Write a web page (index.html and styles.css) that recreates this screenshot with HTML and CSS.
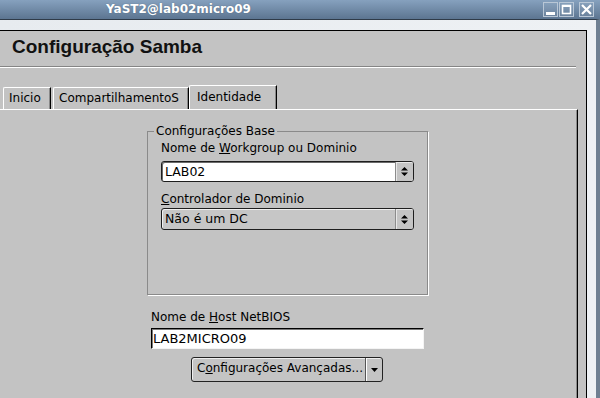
FILE: index.html
```html
<!DOCTYPE html>
<html lang="pt">
<head>
<meta charset="utf-8">
<title>Configuração Samba</title>
<link rel="stylesheet" href="styles.css">
</head>
<body>
<div class="titlebar">
  <span class="title">YaST2@lab02micro09</span>
  <div class="wbtns">
    <span class="wbtn"><svg width="13" height="13" viewBox="0 0 13 13"><rect x="2" y="9" width="9" height="3" fill="#fff"/></svg></span>
    <span class="wbtn gap"><svg width="13" height="13" viewBox="0 0 13 13"><rect x="2.5" y="2.5" width="8" height="8" fill="none" stroke="#fff" stroke-width="1.6"/><rect x="2" y="2" width="9" height="2" fill="#fff"/></svg></span>
    <span class="wbtn gap2"><svg width="13" height="13" viewBox="0 0 13 13"><path d="M2 2 L11 11 M11 2 L2 11" stroke="#fff" stroke-width="2.2"/></svg></span>
  </div>
</div>
<div class="frame">
  <div class="content">
    <h1 class="heading">Configuração Samba</h1>
    <div class="sep"></div>
    <div class="tabs">
      <div class="tab t1">Inicio</div>
      <div class="tab t2">CompartilhamentoS</div>
      <div class="tab t3 active">Identidade</div>
    </div>
    <div class="panel">
      <fieldset class="group">
        <legend>Configurações Base</legend>
        <div class="label">Nome de <u>W</u>orkgroup ou Dominio</div>
        <div class="combo editable">
          <span class="ctext">LAB02</span>
          <span class="spin"><svg width="9" height="11" viewBox="0 0 9 11"><path d="M1 4.5 L4.5 1 L8 4.5 Z M1 6.5 L4.5 10 L8 6.5 Z" fill="#000"/></svg></span>
        </div>
        <div class="label l2"><u>C</u>ontrolador de Dominio</div>
        <div class="combo readonly">
          <span class="ctext">Não é um DC</span>
          <span class="spin"><svg width="9" height="11" viewBox="0 0 9 11"><path d="M1 4.5 L4.5 1 L8 4.5 Z M1 6.5 L4.5 10 L8 6.5 Z" fill="#000"/></svg></span>
        </div>
      </fieldset>
      <div class="label nb">Nome de <u>H</u>ost NetBIOS</div>
      <div class="input">LAB2MICRO09</div>
      <div class="splitbtn">
        <span class="btn-main">C<u>o</u>nfigurações Avançadas...</span>
        <span class="btn-arrow"><svg width="9" height="6" viewBox="0 0 9 6"><path d="M1 1 L8 1 L4.5 5 Z" fill="#000"/></svg></span>
      </div>
    </div>
  </div>
</div>
</body>
</html>
```

FILE: styles.css
```css
html, body {
  margin: 0;
  padding: 0;
}
body {
  width: 600px;
  height: 398px;
  overflow: hidden;
  display: flex;
  flex-direction: column;
  font-family: "DejaVu Sans", sans-serif;
  font-size: 12px;
  color: #000;
  background: #e7ebef;
}
.titlebar {
  height: 19px;
  flex: none;
  display: flex;
  align-items: center;
  background: linear-gradient(#86a1be, #5c7591);
}
.title {
  margin-left: 106px;
  color: #fff;
  font-weight: bold;
  font-size: 12px;
  line-height: 19px;
  text-shadow: 0 0 1px rgba(40, 60, 80, 0.5);
}
.wbtns {
  margin-left: auto;
  margin-right: 6px;
  display: flex;
  align-items: center;
}
.wbtn {
  width: 15px;
  height: 15px;
  box-sizing: border-box;
  border: 1px solid #b9c7d6;
  display: flex;
  align-items: center;
  justify-content: center;
  background: rgba(255, 255, 255, 0.06);
}
.wbtn.gap { margin-left: 1px; }
.wbtn.gap2 { margin-left: 5px; }
.frame {
  flex: 1;
  display: flex;
  flex-direction: column;
  border-top: 1px solid #2f3b49;
  padding-top: 10px;
  padding-right: 9px;
  border-right: 4px solid #6f8092;
  background: linear-gradient(90deg, #e7ebef, #eef1f4);
}
.content {
  flex: 1;
  display: flex;
  flex-direction: column;
  background: #c3c3c3;
  border-top: 1px solid #000;
  border-right: 1px solid #000;
}
.heading {
  margin: 5px 0 0 12px;
  font-family: "Liberation Sans", Arial, sans-serif;
  font-weight: bold;
  font-size: 19px;
  line-height: 22px;
  color: #111;
}
.sep {
  margin: 8px 10px 0 0;
  border-top: 1px solid #858585;
  border-bottom: 1px solid #fff;
}
.tabs {
  margin-top: 17px;
  height: 24px;
  display: flex;
  align-items: flex-end;
}
.tab {
  box-sizing: border-box;
  height: 22px;
  padding-top: 2px;
  line-height: 16px;
  border-top: 1px solid #fff;
  border-left: 1px solid #fff;
  border-right: 1px solid #000;
  border-top-left-radius: 2px;
  box-shadow: inset -1px 0 0 #888;
  white-space: nowrap;
}
.t1 { margin-left: 3px; width: 48px; padding-left: 5px; }
.t2 { margin-left: 2px; width: 136px; padding-left: 5px; }
.t3 { width: 88px; padding-left: 7px; }
.tab.active { height: 24px; padding-top: 3px; }
.panel {
  flex: 1;
  margin-right: 8px;
  border-top: 1px solid #fff;
  border-right: 1px solid #000;
  box-shadow: inset -1px 0 0 #8a8a8a;
  display: flex;
  flex-direction: column;
  align-items: flex-start;
}
.group {
  box-sizing: border-box;
  width: 281px;
  min-width: 0;
  margin: 13px 0 0 147px;
  padding: 1px 12px 64px 13px;
  border: 1px solid #8a8a8a;
  box-shadow: 1px 1px 0 #fff;
}
.group legend {
  padding: 0 2px;
  margin-left: -7px;
  line-height: 16px;
}
.label {
  line-height: 16px;
  white-space: nowrap;
}
.label.l2 { margin-top: 9px; }
.combo {
  box-sizing: border-box;
  width: 253px;
  height: 21px;
  margin-top: 5px;
  display: flex;
  align-items: stretch;
  border: 1px solid #1e1e1e;
  border-radius: 3px;
  overflow: hidden;
}
.combo.editable {
  background: #fff;
  box-shadow: inset 1px 1px 0 #6a6a6a;
}
.combo.readonly {
  height: 22px;
  margin-top: 1px;
  background: #c6c6c6;
  box-shadow: inset 1px 1px 0 #f0f0f0;
}
.ctext {
  flex: 1;
  padding-left: 3px;
  font-size: 12.5px;
  line-height: 19px;
}
.spin {
  width: 17px;
  border-left: 1px solid #8c8c8c;
  background: #c4c4c4;
  box-shadow: inset 1px 1px 0 #e8e8e8;
  display: flex;
  align-items: center;
  justify-content: center;
}
.label.nb {
  margin: 14px 0 0 151px;
}
.input {
  box-sizing: border-box;
  width: 273px;
  height: 21px;
  margin: 3px 0 0 151px;
  padding-left: 1px;
  background: #fff;
  border-top: 1px solid #000;
  border-left: 1px solid #000;
  border-right: 1px solid #f4f4f4;
  border-bottom: 1px solid #f4f4f4;
  box-shadow: inset 1px 1px 0 #7a7a7a;
  font-size: 13px;
  line-height: 19px;
}
.splitbtn {
  box-sizing: border-box;
  width: 192px;
  height: 25px;
  margin: 8px 0 0 191px;
  display: flex;
  border: 1px solid #222;
  border-radius: 3px;
  background: #c4c4c4;
  box-shadow: inset 1px 1px 0 #eee;
}
.btn-main {
  flex: 1;
  padding-left: 5px;
  line-height: 21px;
  white-space: nowrap;
  border-right: 1px solid #555;
}
.btn-arrow {
  width: 15px;
  border-left: 1px solid #fff;
  display: flex;
  align-items: center;
  justify-content: center;
}
```
